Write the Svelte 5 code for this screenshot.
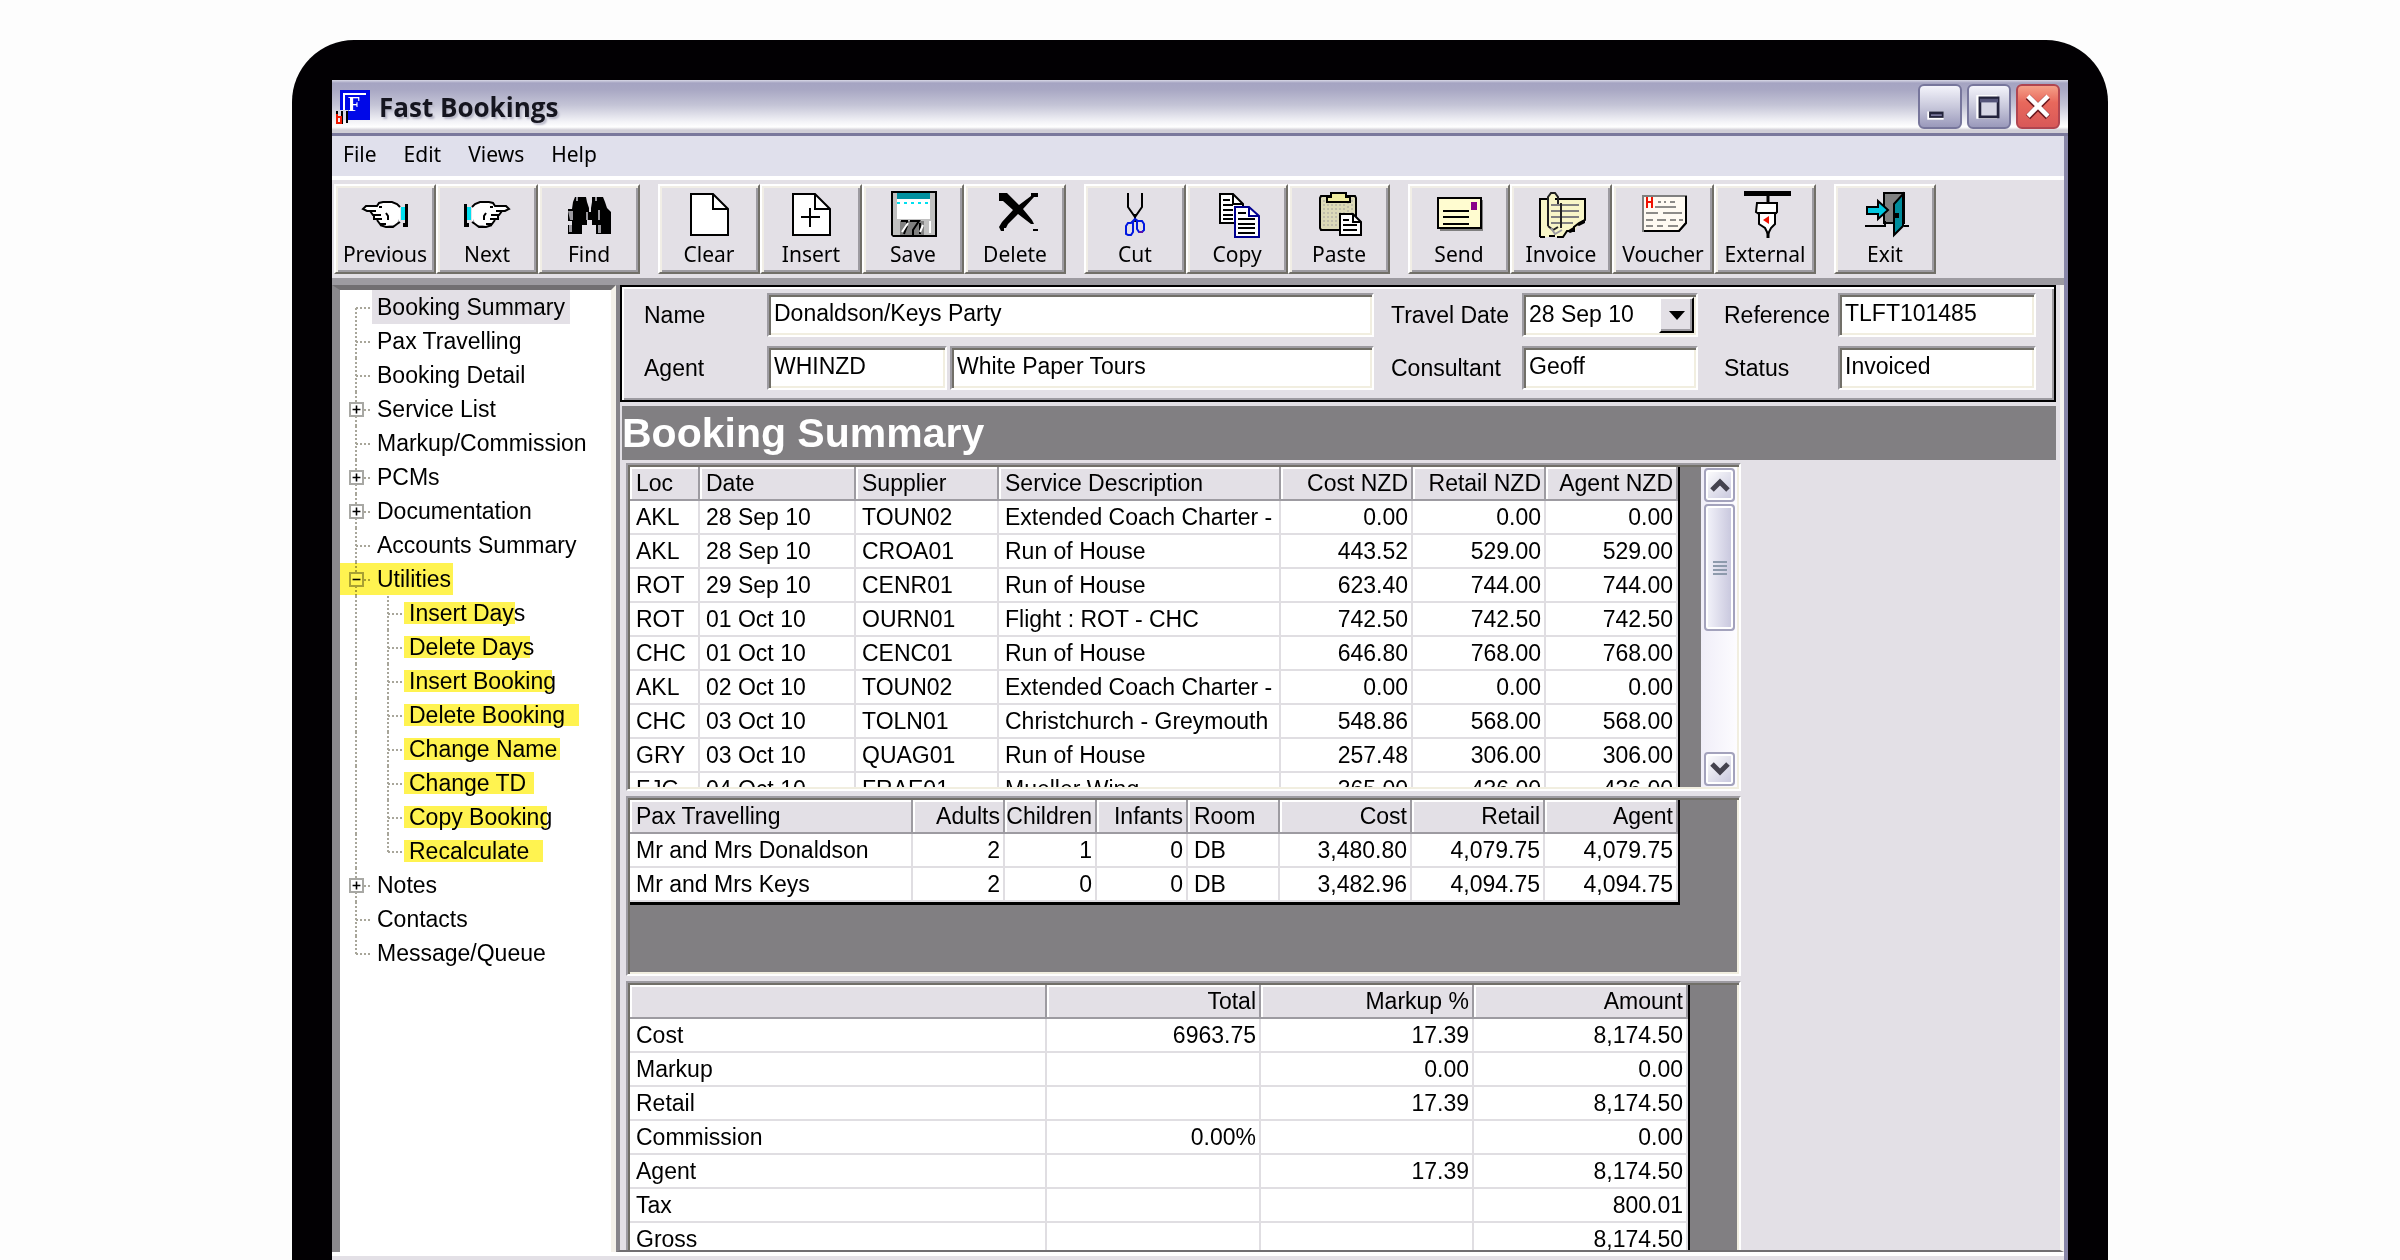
<script>
  const menus = ["File", "Edit", "Views", "Help"];

  const toolGroups = [
    ["Previous", "Next", "Find"],
    ["Clear", "Insert", "Save", "Delete"],
    ["Cut", "Copy", "Paste"],
    ["Send", "Invoice", "Voucher", "External"],
    ["Exit"],
  ];

  // mark = width of the highlighter stroke behind the label
  const tree = [
    { label: "Booking Summary", selected: true, first: true },
    { label: "Pax Travelling" },
    { label: "Booking Detail" },
    { label: "Service List", box: "+" },
    { label: "Markup/Commission" },
    { label: "PCMs", box: "+" },
    { label: "Documentation", box: "+" },
    { label: "Accounts Summary" },
    { label: "Utilities", box: "-", open: true },
    { label: "Insert Days", child: true, mark: 111 },
    { label: "Delete Days", child: true, mark: 126 },
    { label: "Insert Booking", child: true, mark: 148 },
    { label: "Delete Booking", child: true, mark: 175 },
    { label: "Change Name", child: true, mark: 156 },
    { label: "Change TD", child: true, mark: 130 },
    { label: "Copy Booking", child: true, mark: 143 },
    { label: "Recalculate", child: true, last: true, mark: 139 },
    { label: "Notes", box: "+" },
    { label: "Contacts" },
    { label: "Message/Queue", last: true },
  ];

  const services = {
    cols: [70, 156, 143, 282, 132, 133, 132],
    textCols: [0, 1, 2, 3],
    head: ["Loc", "Date", "Supplier", "Service Description", "Cost NZD", "Retail NZD", "Agent NZD"],
    rows: [
      ["AKL", "28 Sep 10", "TOUN02", "Extended Coach Charter -", "0.00", "0.00", "0.00"],
      ["AKL", "28 Sep 10", "CROA01", "Run of House", "443.52", "529.00", "529.00"],
      ["ROT", "29 Sep 10", "CENR01", "Run of House", "623.40", "744.00", "744.00"],
      ["ROT", "01 Oct 10", "OURN01", "Flight : ROT - CHC", "742.50", "742.50", "742.50"],
      ["CHC", "01 Oct 10", "CENC01", "Run of House", "646.80", "768.00", "768.00"],
      ["AKL", "02 Oct 10", "TOUN02", "Extended Coach Charter -", "0.00", "0.00", "0.00"],
      ["CHC", "03 Oct 10", "TOLN01", "Christchurch - Greymouth", "548.86", "568.00", "568.00"],
      ["GRY", "03 Oct 10", "QUAG01", "Run of House", "257.48", "306.00", "306.00"],
      ["FJG", "04 Oct 10", "FRAE01", "Mueller Wing", "365.00", "436.00", "436.00"],
    ],
  };

  const pax = {
    cols: [283, 92, 92, 91, 92, 132, 133, 133],
    textCols: [0, 4],
    head: ["Pax Travelling", "Adults", "Children", "Infants", "Room", "Cost", "Retail", "Agent"],
    rows: [
      ["Mr and Mrs Donaldson", "2", "1", "0", "DB", "3,480.80", "4,079.75", "4,079.75"],
      ["Mr and Mrs Keys", "2", "0", "0", "DB", "3,482.96", "4,094.75", "4,094.75"],
    ],
  };

  const totals = {
    cols: [417, 214, 213, 214],
    textCols: [0],
    head: ["", "Total", "Markup %", "Amount"],
    rows: [
      ["Cost", "6963.75", "17.39", "8,174.50"],
      ["Markup", "", "0.00", "0.00"],
      ["Retail", "", "17.39", "8,174.50"],
      ["Commission", "0.00%", "", "0.00"],
      ["Agent", "", "17.39", "8,174.50"],
      ["Tax", "", "", "800.01"],
      ["Gross", "", "", "8,174.50"],
    ],
  };

  const sum = (list) => list.reduce((a, b) => a + b, 0);
</script>

{#snippet hand()}
  <path d="M1 17L4 14H16L18 11L22 9H31L36 12L39 15V31L36 33L32 35H25L19 33L16 29L13 26L12 22L8 20L3 19Z" fill="#fff" />
  <path d="M25 33H35L38 27V31L32 35Z" fill="#9d9ba1" />
  <path d="M39 15L36 12L31 10H22L18 11L16 14H5L2 17L6 19H15M18 15H21M9 19L12 23H20M13 24V27H21M16 28L19 32H25M25 21L27 24V28M19 33L25 35H32L36 32L39 30" fill="none" stroke="#000" stroke-width="2" />
  <rect x="40" y="15" width="4" height="13" fill="#00e0f0" />
  <path d="M44 12H47V35H42V31H44Z" fill="#000" />
{/snippet}

{#snippet icon(name)}
  <svg class="icon" viewBox="0 0 48 48" aria-hidden="true">
    {#if name === "Previous"}
      {@render hand()}
    {:else if name === "Next"}
      <g transform="translate(48 0) scale(-1 1)">{@render hand()}</g>
    {:else if name === "Find"}
      <path d="M8 10L10 5H21L22 10L24 16V20H26V16L27 10V5H38L40 10L42 16L46 20V42H31V33H27V28H22V33H17V42H3V33H7V29H3V17H7Z" fill="#000" />
      <path d="M3 19H8V28H5M4 33H7V40H4ZM21 20H23V28H21ZM33 18H35V28H33ZM33 33H36V41H33Z" fill="#9d9ba1" />
      <path d="M12 5V9M31 5V9" stroke="#9d9ba1" stroke-width="2" />
    {:else if name === "Clear" || name === "Insert"}
      <path d="M6 2H28L43 17V43H6Z" fill="#fff" stroke="#000" stroke-width="2" />
      <path d="M28 2V17H43" fill="none" stroke="#000" stroke-width="2" />
      {#if name === "Insert"}
        <path d="M14 25H33M23 16V35" stroke="#000" stroke-width="2" />
      {/if}
    {:else if name === "Save"}
      <path d="M2 -1H48V45H4L2 43Z" fill="#000" />
      <path d="M4 1H46V43H4Z" fill="#c0c0c0" />
      <rect x="8" y="1" width="33" height="6" fill="#0090a0" />
      <rect x="8" y="7" width="33" height="20" fill="#fff" />
      <path d="M8 11H40" stroke="#00e0f0" stroke-width="2" stroke-dasharray="3 4" />
      <path d="M11 29H35V43H11Z" fill="#808080" />
      <path d="M12 29H18V33M21 29H30L24 38V43M31 31V42M18 34L15 42" fill="none" stroke="#000" stroke-width="2" />
      <path d="M13 40L19 31M31 40L34 33M41 29V41" fill="none" stroke="#fff" stroke-width="2" />
    {:else if name === "Delete"}
      <path d="M8 1H16L28 13L40 4V1H47V5H43L32 17L41 28L43 32L40 32L27 22L17 32L15 36H13V39H10L8 35L11 30L22 18L12 9H8Z" fill="#000" />
      <path d="M42 37H47V39H42Z" fill="#000" />
    {:else if name === "Cut"}
      <path d="M17 1V15L24 25L31 15V1M24 22V30" fill="none" stroke="#000" stroke-width="2" />
      <path d="M24 27L20 31H17L15 34V42L17 43H20L22 40V30L24 27L27 29H31L33 32V38L31 40H28L26 37V29" fill="none" stroke="#0018e0" stroke-width="2" />
      <path d="M28 40H32" stroke="#5a10b0" stroke-width="2" />
    {:else if name === "Copy"}
      <path d="M7 2H20L30 12V31H7Z" fill="#fff" stroke="#000" stroke-width="2" />
      <path d="M20 2V12H30M10 8H17M10 13H20M10 18H20M10 23H20M10 27H20" fill="none" stroke="#000" stroke-width="2" />
      <path d="M22 15H36L46 24V45H22Z" fill="#fff" stroke="#000090" stroke-width="2" />
      <path d="M36 15V24H46" fill="none" stroke="#000090" stroke-width="2" />
      <path d="M25 21H33M25 27H42M25 32H42M25 36H42M25 41H42" stroke="#000" stroke-width="2" />
    {:else if name === "Paste"}
      <path d="M6 4H40L41 6V38H6L5 36V6Z" fill="#dcdab8" stroke="#000" stroke-width="2" />
      <path d="M9 8V36M13 12V36M17 12V36M21 12V36M25 12V36M29 12V36M33 10V36M37 8V36" stroke="#c0beac" stroke-width="2" stroke-dasharray="2 2" />
      <path d="M16 1H31V5H35V10H12V5H16Z" fill="#f0eca0" stroke="#000" stroke-width="2" />
      <path d="M25 22H38L46 30V43H25Z" fill="#fff" stroke="#000" stroke-width="2" />
      <path d="M38 22V30H46M28 28H34M28 33H42M28 38H42" fill="none" stroke="#000" stroke-width="2" />
    {:else if name === "Send"}
      <path d="M5 8H48V39H5Z" fill="#808080" />
      <path d="M3 6H46V36H3Z" fill="#fffcd0" stroke="#000" stroke-width="2" />
      <rect x="36" y="10" width="6" height="8" fill="#880088" />
      <path d="M8 19H34M8 25H34M8 32H34" stroke="#000" stroke-width="2" />
    {:else if name === "Invoice"}
      <path d="M3 7H12V2H18L21 7H48V27L42 31L38 38L30 40L27 45H3Z" fill="#f8f6c8" />
      <path d="M3 45V7H10M18 7H48V28L42 31L37 35V39H30L26 45H20M3 45H8M12 44H18" fill="none" stroke="#000" stroke-width="2" />
      <path d="M14 13H42M14 19H42M14 25H42M14 31H36" stroke="#808080" stroke-width="2" />
      <path d="M11 34V5L14 1H18L21 5V12M24 11V36M11 34L16 38L21 35" fill="none" stroke="#222" stroke-width="2" />
      <path d="M40 33L48 27V31L42 34ZM30 39L38 34V39L33 41Z" fill="#000" />
      <path d="M14 36L18 42L25 38" fill="none" stroke="#9d9ba1" stroke-width="2" />
    {:else if name === "Voucher"}
      <path d="M4 4H47V31L40 39H4Z" fill="#fffaf2" stroke="#808080" stroke-width="2" />
      <path d="M47 4V31L40 39H5" fill="none" stroke="#000" stroke-width="2" />
      <path d="M8 5V16M13 5V16M8 10H13" stroke="#f01000" stroke-width="2" />
      <path d="M19 10H22M25 10H27M31 10H36M16 15H37M7 21H19M24 21H43M7 28H14M18 28H27M31 28H37M40 28H44M7 34H14M18 34H24M29 34H39" stroke="#8d8b88" stroke-width="2" />
    {:else if name === "External"}
      <path d="M3 -1H50V4H3Z" fill="#000" />
      <path d="M27 3V12M27 36V46" stroke="#000" stroke-width="3" />
      <path d="M16 11H36V20L34 22V32L30 36L27 42L24 36L18 32V22L15 20Z" fill="#fff" stroke="#000" stroke-width="2" />
      <path d="M16 21H36" stroke="#000" stroke-width="2" />
      <path d="M22 28L28 24V32Z" fill="#f01000" />
    {:else if name === "Exit"}
      <path d="M23 1H43V31H23Z" fill="#808080" stroke="#000" stroke-width="2" />
      <path d="M42 2V34L33 43V12Z" fill="#008c9c" stroke="#000" stroke-width="2" />
      <path d="M6 15H17V9L27 18L17 27V22H6Z" fill="#00c8e0" stroke="#000" stroke-width="2" />
      <path d="M4 34H24V29M43 34H48" fill="none" stroke="#000" stroke-width="2" />
      <rect x="34" y="21" width="4" height="5" fill="#000" />
    {/if}
  </svg>
{/snippet}

{#snippet grid(t, caption)}
  <table class="grid" aria-label={caption} style:width={sum(t.cols) + "px"}>
    <colgroup>
      {#each t.cols as w}
        <col style:width={w + "px"} />
      {/each}
    </colgroup>
    <thead>
      <tr>
        {#each t.head as h, c}
          <th scope="col" class:num={!t.textCols.includes(c)}>{h}</th>
        {/each}
      </tr>
    </thead>
    <tbody>
      {#each t.rows as row}
        <tr>
          {#each row as cell, c}
            <td class:num={!t.textCols.includes(c)}>{cell}</td>
          {/each}
        </tr>
      {/each}
    </tbody>
  </table>
{/snippet}

<div class="page">
  <div class="bezel">
    <div class="window">
      <header class="titlebar">
        <svg class="logo" viewBox="0 0 36 36" aria-hidden="true">
          <rect x="5" y="1" width="30" height="30" fill="#0008e8" />
          <path d="M9 24V5H31" fill="none" stroke="#fff" stroke-width="2" />
          <text x="13" y="22" font-family="Liberation Serif" font-weight="bold" font-size="20" fill="#fff">F</text>
          <path d="M5 21H13V31H5Z" fill="#d8d8e6" />
          <path d="M2 22V29M7 22V35M12 22V34" stroke="#000" stroke-width="2" />
          <path d="M2 25V34H6V28H2" fill="none" stroke="#f01800" stroke-width="2" />
        </svg>
        <h1>Fast Bookings</h1>
        <div class="controls">
          <button aria-label="Minimize">
            <svg viewBox="0 0 44 45"><path d="M8 28H26V37H8Z" fill="#fff" /><path d="M10 28H26V35H10Z" fill="#23233c" /><path d="M12 31H24V33H12Z" fill="#77759a" /></svg>
          </button>
          <button aria-label="Maximize">
            <svg viewBox="0 0 44 45"><path d="M8 10H31V36H8Z" fill="#fff" /><path d="M12 13H32V34H12Z" fill="#d6d6e4" stroke="#23233c" stroke-width="3" /><path d="M12 14H32V18H12Z" fill="#55557a" /></svg>
          </button>
          <button class="close" aria-label="Close">
            <svg viewBox="0 0 44 45"><path d="M11 12L33 34M33 12L11 34" stroke="#6b1a20" stroke-width="7" /><path d="M11 11L33 33M33 11L11 33" stroke="#fff" stroke-width="5" /></svg>
          </button>
        </div>
      </header>

      <div class="client">
        <nav class="menubar">
          {#each menus as m}
            <button>{m}</button>
          {/each}
        </nav>

        <div class="toolbar">
          {#each toolGroups as group}
            <div class="group">
              {#each group as name}
                <button class="tool">
                  {@render icon(name)}
                  <span>{name}</span>
                </button>
              {/each}
            </div>
          {/each}
        </div>

        <div class="body">
          <ul class="tree">
            {#each tree as n}
              <li>
                <svg class="lines" class:wide={n.child} viewBox={n.child ? "0 0 64 34" : "0 0 32 34"} aria-hidden="true">
                  <g stroke="#a8a69a" stroke-width="2" stroke-dasharray="2 2">
                    <path d={n.first ? "M16 18V34" : n.last && !n.child ? "M16 0V18" : "M16 0V34"} />
                    {#if n.child}
                      <path d={n.last ? "M48 0V18" : "M48 0V34"} />
                    {/if}
                    <path d={n.child ? "M48 18H64" : "M16 18H32"} />
                  </g>
                </svg>
                {#if n.box}
                  <button class="box" aria-label={(n.open ? "Collapse " : "Expand ") + n.label}>
                    <svg viewBox="0 0 14 14">
                      <path d={n.open ? "M2 7H12" : "M2 7H12M7 2V12"} stroke="#000" stroke-width="2" />
                    </svg>
                  </button>
                {/if}
                {#if n.mark}
                  <a href="#top" class="child"><mark style:width={n.mark + "px"}>{n.label}</mark></a>
                {:else}
                  <a href="#top" class:selected={n.selected} class:open={n.open}>{n.label}</a>
                {/if}
              </li>
            {/each}
          </ul>

          <main>
            <form class="details">
              <label for="name">Name</label>
              <input id="name" class="span" value="Donaldson/Keys Party" />
              <label for="travel" class="mid">Travel Date</label>
              <div class="combo">
                <select id="travel"><option>28 Sep 10</option></select>
                <span class="drop" aria-hidden="true"></span>
              </div>
              <label for="reference" class="end">Reference</label>
              <input id="reference" value="TLFT101485" />

              <label for="agent">Agent</label>
              <input id="agent" value="WHINZD" />
              <input aria-label="Agent name" value="White Paper Tours" />
              <label for="consultant" class="mid">Consultant</label>
              <input id="consultant" value="Geoff" />
              <label for="status" class="end">Status</label>
              <input id="status" value="Invoiced" />
            </form>

            <h2>Booking Summary</h2>

            <div class="panels">
              <section class="panel services">
                <div class="sheet">{@render grid(services, "Services")}</div>
                <div class="scroll">
                  <button aria-label="Scroll up">
                    <svg viewBox="0 0 20 16"><path d="M2 13L10 5L18 13" fill="none" stroke="#44424e" stroke-width="5" /></svg>
                  </button>
                  <div class="thumb"><i></i><i></i><i></i><i></i></div>
                  <button class="down" aria-label="Scroll down">
                    <svg viewBox="0 0 20 16"><path d="M2 3L10 11L18 3" fill="none" stroke="#44424e" stroke-width="5" /></svg>
                  </button>
                </div>
              </section>
              <section class="panel pax">
                <div class="sheet edge">{@render grid(pax, "Pax Travelling")}</div>
              </section>
              <section class="panel totals">
                <div class="sheet">{@render grid(totals, "Totals")}</div>
              </section>
            </div>
          </main>
        </div>
      </div>
    </div>
  </div>
</div>

<style>
  :global(body) {
    background: #fdfdfd;
  }

  .page {
    --face: #e3e0e6;
    --shade: #9d9ba1;
    --dark: #716f72;
    box-sizing: border-box;
    height: 100vh;
    padding: 40px 292px 0;
    overflow: hidden;
    font-family: "Liberation Sans", Arial, sans-serif;
    font-size: 23px;
    line-height: 30px;
    color: #000;
  }

  .page *,
  .page *::before {
    box-sizing: border-box;
  }

  button,
  input,
  select {
    margin: 0;
    padding: 0;
    border: 0;
    border-radius: 0;
    font: inherit;
    color: inherit;
    background: none;
  }

  svg {
    display: block;
  }

  .bezel {
    height: 100%;
    padding: 40px 40px 0;
    border-radius: 62px 62px 0 0;
    background: #020003;
  }

  .window {
    display: flex;
    flex-direction: column;
    height: 100%;
    background: var(--face);
  }

  .titlebar {
    flex: none;
    display: flex;
    align-items: center;
    height: 56px;
    padding: 0 8px 0 3px;
    border-bottom: 3px solid #7a789c;
    background: linear-gradient(#d8d8e6 0, #a5a4c2 3px, #a9a8c4 10px, #c4c4d6 25px, #f4f4f8 42px, #fff 47px, #d0ced6 50px, #d0ced6);
  }

  .logo {
    width: 36px;
    height: 36px;
  }

  h1 {
    flex: 1;
    margin: 0 0 0 8px;
    font: bold 26px/40px "Open Sans", sans-serif;
    color: #15151f;
    text-shadow: 2px 2px 2px #b8b8c8;
  }

  .controls {
    display: flex;
    gap: 5px;
  }

  .controls button {
    width: 44px;
    height: 45px;
    border: 2px solid #77769c;
    border-radius: 6px;
    background: linear-gradient(#f4f4fb, #c9c9dc 50%, #9a99bb);
  }

  .controls svg {
    width: 40px;
    height: 41px;
  }

  .controls .close {
    border-color: #b04550;
    background: linear-gradient(#f5a088, #e8685c 40%, #d85858);
  }

  .client {
    flex: 1;
    min-height: 0;
    display: flex;
    flex-direction: column;
    border-right: 4px solid #8886a8;
  }

  .menubar,
  .toolbar {
    flex: none;
    display: flex;
    font-family: "Noto Sans", sans-serif;
    font-size: 21px;
  }

  .menubar {
    gap: 27px;
    height: 44px;
    padding: 0 11px 4px;
    border-bottom: 4px solid #fff;
    background: #e0e0ec;
  }

  .toolbar {
    gap: 18px;
    height: 98px;
    padding: 4px 2px;
  }

  .group {
    display: flex;
  }

  .tool {
    display: flex;
    flex-direction: column;
    align-items: center;
    gap: 1px;
    width: 102px;
    padding-top: 6px;
    border: 2px solid;
    border-color: #fff #716f68 #716f68 #fff;
    box-shadow: inset 2px 2px 0 #f1eee6, inset -2px -2px 0 var(--shade);
    white-space: nowrap;
  }

  .tool span {
    line-height: 26px;
  }

  .icon {
    width: 48px;
    height: 48px;
    overflow: visible;
  }

  .body {
    flex: 1;
    min-height: 0;
    display: flex;
    padding-bottom: 8px;
    border-top: 7px solid var(--shade);
  }

  .tree {
    flex: none;
    width: 284px;
    margin: 0;
    padding: 0;
    list-style: none;
    overflow: hidden;
    border: solid;
    border-width: 5px 5px 0 8px;
    border-color: var(--dark) #f4f1ea #fff #8a888c;
    box-shadow: 0 4px 0 #fff;
    background: #fff;
  }

  .tree li {
    position: relative;
    display: flex;
    align-items: center;
    height: 34px;
  }

  .lines {
    flex: none;
    width: 32px;
    height: 34px;
  }

  .lines.wide {
    width: 64px;
  }

  .tree a {
    padding-right: 5px;
    padding-left: 5px;
    line-height: 34px;
    color: #000;
    text-decoration: none;
    white-space: nowrap;
  }

  .tree a.selected {
    background: var(--face);
  }

  .tree a.child {
    padding: 0;
  }

  /* this stroke covers the expander as well as the text */
  .tree a.open::before {
    content: "";
    position: absolute;
    inset: 1px auto 1px 0;
    width: 113px;
    background: #fff350;
    mix-blend-mode: multiply;
  }

  mark {
    display: block;
    height: 22px;
    padding-left: 5px;
    line-height: 22px;
    color: #000;
    background: #fff350;
  }

  .box {
    position: absolute;
    top: 10px;
    left: 9px;
    width: 15px;
    height: 15px;
    border: 2px solid #a8a8a4;
    background: #fff;
  }

  .box svg {
    width: 11px;
    height: 11px;
  }

  main {
    flex: 1;
    min-width: 0;
    display: flex;
    flex-direction: column;
    padding-right: 4px;
    border: solid;
    border-width: 0 4px 2px;
    border-color: #716f72 #f6f4f0 #716f72 #86848a;
    box-shadow: 0 4px 0 #fff;
  }

  .details {
    flex: none;
    display: grid;
    grid-template-columns: 123px 180px 1fr 148px 176px 140px 198px;
    grid-auto-rows: 44px;
    row-gap: 9px;
    align-items: center;
    padding: 6px 18px 10px 22px;
    border: 2px solid #000;
    box-shadow: inset 2px 2px 0 #fff, inset -2px -2px 0 var(--shade);
  }

  .details input,
  .combo {
    width: 100%;
    min-width: 0;
    height: 44px;
    padding: 0 5px 3px;
    border: 2px solid;
    border-color: var(--shade) #fff #fff var(--shade);
    box-shadow: inset 2px 2px 0 #716f68, inset -2px -2px 0 #f1eee0;
    background: #fff;
  }

  .details .span {
    grid-column: span 2;
  }

  .details input[aria-label] {
    width: auto;
    margin-left: 3px;
  }

  .mid {
    padding-left: 17px;
  }

  .end {
    padding-left: 26px;
  }

  .combo {
    display: flex;
    padding: 2px 2px 2px 5px;
  }

  .combo select {
    flex: 1;
    min-width: 0;
    padding-bottom: 3px;
    appearance: none;
  }

  .drop {
    display: grid;
    place-items: center;
    width: 35px;
    border: 2px solid;
    border-color: #fff #000 #000 #fff;
    box-shadow: inset -2px -2px 0 var(--shade);
    background: var(--face);
  }

  .drop::before {
    content: "";
    border: solid transparent;
    border-width: 9px 8px 0;
    border-top-color: #000;
  }

  h2 {
    flex: none;
    margin: 4px 0 0 2px;
    height: 54px;
    font-size: 41px;
    line-height: 54px;
    color: #fff;
    background: #817f82;
  }

  .panels {
    flex: 1;
    min-height: 0;
    display: flex;
    flex-direction: column;
    gap: 5px;
    padding: 3px 0 0 6px;
  }

  .panel {
    display: flex;
    align-items: flex-start;
    justify-content: space-between;
    width: 78%;
    overflow: hidden;
    border: 2px solid;
    border-color: var(--shade) #fff #fff var(--shade);
    padding: 2px;
    background: #817f82;
    box-shadow: inset 2px 2px 0 #716f68, inset -2px -2px 0 #f1eee0;
  }

  .services {
    flex: none;
    height: 328px;
  }

  .pax {
    flex: none;
    height: 180px;
  }

  .totals {
    flex: 1;
    min-height: 0;
    padding-bottom: 0;
    border-bottom: 0;
    box-shadow: inset 2px 2px 0 #716f68, inset -2px 0 0 #f1eee0;
  }

  .sheet {
    max-height: 100%;
    overflow: hidden;
    border-right: 2px solid #000;
  }

  .edge {
    border-bottom: 3px solid #000;
  }

  .grid {
    table-layout: fixed;
    border-collapse: separate;
    border-spacing: 0;
    background: #fff;
  }

  th,
  td {
    height: 34px;
    padding: 0 4px 0 6px;
    overflow: hidden;
    border-right: 2px solid #e0dee2;
    border-bottom: 2px solid #e0dee2;
    font-weight: normal;
    text-align: left;
    white-space: nowrap;
  }

  th {
    border-color: var(--shade);
    box-shadow: inset 2px 2px 0 #fff;
    background: var(--face);
  }

  .num {
    padding: 0 3px 0 0;
    text-align: right;
  }

  .scroll {
    display: flex;
    flex-direction: column;
    gap: 2px;
    width: 36px;
    height: 100%;
    padding: 1px 2px 1px 3px;
    background: linear-gradient(90deg, #f0eef8, #fdfcff);
  }

  .scroll button,
  .thumb {
    display: grid;
    place-items: center;
    flex: none;
    height: 34px;
    border: 2px solid #a3a2bc;
    border-radius: 4px;
    background: linear-gradient(135deg, #fff, #c6c5dc);
    box-shadow: inset 0 0 0 2px #fff;
  }

  .scroll svg {
    width: 20px;
    height: 16px;
  }

  .scroll .thumb {
    align-content: center;
    gap: 2px;
    height: 127px;
    background: linear-gradient(90deg, #f4f4fb, #c6c5dc);
  }

  .thumb i {
    width: 14px;
    height: 2px;
    background: #8d9aac;
  }

  .scroll .down {
    margin-top: auto;
  }
</style>
